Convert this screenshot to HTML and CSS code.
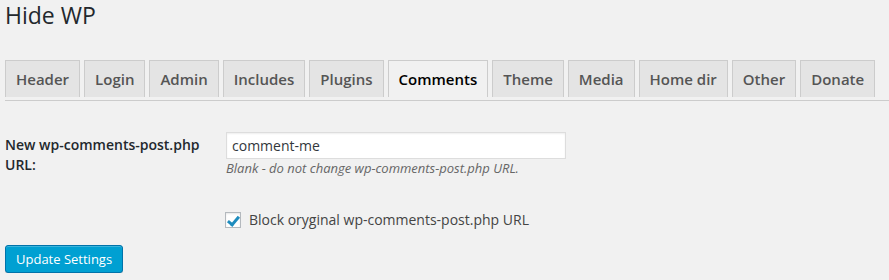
FILE: index.html
```html
<!DOCTYPE html>
<html>
    <head>
        <title>Hide WP</title>
        <link rel="stylesheet" href="styles.css">
    </head>
    <body>
        <div class="wrap">
            <h1>Hide WP</h1>

            <div class="tabs">
                <a class="tab" href="#">Header</a>
                <a class="tab" href="#">Login</a>
                <a class="tab" href="#">Admin</a>
                <a class="tab" href="#">Includes</a>
                <a class="tab" href="#">Plugins</a>
                <a class="tab active" href="#">Comments</a>
                <a class="tab" href="#">Theme</a>
                <a class="tab" href="#">Media</a>
                <a class="tab" href="#">Home dir</a>
                <a class="tab" href="#">Other</a>
                <a class="tab" href="#">Donate</a>
            </div>

            <form>
                <table class="form-table">
                    <tr>
                        <th class="label">New wp-comments-post.php URL:</th>
                        <td class="field">
                            <input class="text-input" type="text" value="comment-me">
                            <p class="description">Blank - do not change wp-comments-post.php URL.</p>
                        </td>
                    </tr>
                    <tr>
                        <th></th>
                        <td class="field check-row">
                            <label class="check">
                                <input class="checkbox" type="checkbox" checked>
                                <span>Block oryginal wp-comments-post.php URL</span>
                            </label>
                        </td>
                    </tr>
                </table>

                <div class="submit">
                    <button class="button-primary" type="button">Update Settings</button>
                </div>
            </form>
        </div>
    </body>
</html>
```

FILE: styles.css
```css
body {
    margin: 0;
    background-color: #f1f1f1;
    font-family: "Open Sans", "Noto Sans", sans-serif;
    font-size: 13px;
    color: #444;
}

.wrap {
    padding-left: 5px;
}

h1 {
    margin: 0;
    padding-top: 1px;
    font-size: 23px;
    font-weight: 400;
    line-height: 28px;
    color: #23282d;
}

/* tabs */

.tabs {
    display: flex;
    gap: 4px;
    margin-top: 31px;
    padding-bottom: 3px;
    border-bottom: 1px solid #ccc;
}

.tab {
    padding: 6px 10px;
    font-size: 15px;
    font-weight: 600;
    line-height: 24px;
    color: #555;
    text-decoration: none;
    background-color: #e4e4e4;
    border: 1px solid #ccc;
    border-bottom: none;
}

.tab.active {
    color: #000;
    background-color: #f1f1f1;
}

/* form */

.form-table {
    margin-top: 16px;
    border-collapse: collapse;
}

.form-table th {
    width: 200px;
    padding: 18px 10px 20px 0;
    vertical-align: top;
    text-align: left;
    font-size: 14px;
    font-weight: 600;
    line-height: 20px;
    color: #23282d;
}

.form-table td {
    padding: 15px 10px;
    vertical-align: top;
}

.text-input {
    display: block;
    box-sizing: border-box;
    width: 340px;
    height: 27px;
    margin: 0 0 0 1px;
    padding: 0 5px;
    font-family: "Open Sans", sans-serif;
    font-size: 14px;
    color: #32373c;
    background-color: #fff;
    border: 1px solid #ddd;
    box-shadow: inset 0 1px 2px rgba(0, 0, 0, 0.07);
    outline: none;
}

.description {
    margin: 0 0 0 1px;
    font-size: 13px;
    font-style: italic;
    line-height: 19px;
    color: #666;
}

.check-row {
    padding-top: 13px;
    padding-bottom: 14px;
}

.check {
    display: flex;
    align-items: center;
    gap: 8px;
    font-size: 14px;
    line-height: 20px;
    color: #444;
}

.checkbox {
    appearance: none;
    position: relative;
    width: 16px;
    height: 16px;
    margin: 0;
    background-color: #fff;
    border: 1px solid #b4b9be;
    box-shadow: inset 0 1px 2px rgba(0, 0, 0, 0.1);
}

.checkbox:checked::before {
    content: "";
    position: absolute;
    left: 4px;
    top: 1px;
    width: 4px;
    height: 9px;
    border: solid #1e8cbe;
    border-width: 0 3px 3px 0;
    transform: rotate(40deg);
}

.button-primary {
    height: 28px;
    padding: 0 10px 1px;
    font-family: "Open Sans", sans-serif;
    font-size: 13px;
    line-height: 26px;
    color: #fff;
    background-color: #00a0d2;
    border: 1px solid #0073aa;
    border-radius: 3px;
    box-shadow: inset 0 1px 0 rgba(120, 200, 230, 0.5), 0 1px 0 rgba(0, 0, 0, 0.15);
    cursor: pointer;
}
```
